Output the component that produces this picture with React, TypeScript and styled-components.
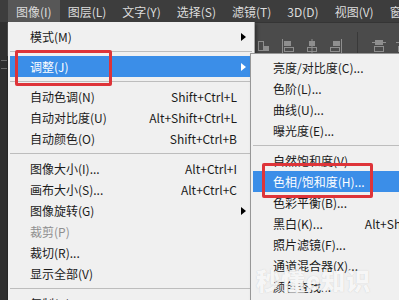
import styled, { createGlobalStyle } from 'styled-components';

const GlobalStyle = createGlobalStyle`
  html, body {
    margin: 0;
    padding: 0;
    width: 399px;
    height: 300px;
    overflow: hidden;
    background: #282828;
  }
  body {
    font-family: "Noto Sans CJK SC", "Noto Sans", sans-serif;
  }
`;

type Item =
  | { label: string; shortcut?: string; arrow?: boolean; active?: boolean; disabled?: boolean }
  | 'sep';

const topMenus = ['图像(I)', '图层(L)', '文字(Y)', '选择(S)', '滤镜(T)', '3D(D)', '视图(V)', '窗口(W)'];

const imageMenu: Item[] = [
  { label: '模式(M)', arrow: true },
  'sep',
  { label: '调整(J)', arrow: true, active: true },
  'sep',
  { label: '自动色调(N)', shortcut: 'Shift+Ctrl+L' },
  { label: '自动对比度(U)', shortcut: 'Alt+Shift+Ctrl+L' },
  { label: '自动颜色(O)', shortcut: 'Shift+Ctrl+B' },
  'sep',
  { label: '图像大小(I)...', shortcut: 'Alt+Ctrl+I' },
  { label: '画布大小(S)...', shortcut: 'Alt+Ctrl+C' },
  { label: '图像旋转(G)', arrow: true },
  { label: '裁剪(P)', disabled: true },
  { label: '裁切(R)...' },
  { label: '显示全部(V)' },
  'sep',
  { label: '复制(D)...' },
];

const adjustMenu: Item[] = [
  { label: '亮度/对比度(C)...' },
  { label: '色阶(L)...', shortcut: 'Ctrl+L' },
  { label: '曲线(U)...', shortcut: 'Ctrl+M' },
  { label: '曝光度(E)...' },
  'sep',
  { label: '自然饱和度(V)...' },
  { label: '色相/饱和度(H)...', shortcut: 'Ctrl+U', active: true },
  { label: '色彩平衡(B)...', shortcut: 'Ctrl+B' },
  { label: '黑白(K)...', shortcut: 'Alt+Shift+Ctrl+B' },
  { label: '照片滤镜(F)...' },
  { label: '通道混合器(X)...' },
  { label: '颜色查找...' },
  'sep',
];

function renderItems(items: Item[]) {
  return items.map((it, i) => {
    if (it === 'sep') return <Separator key={i} />;
    return (
      <Row key={i} $active={it.active} $disabled={it.disabled}>
        <span>{it.label}</span>
        <Shortcut $active={it.active}>{it.shortcut ?? ''}</Shortcut>
        <ArrowCell>{it.arrow && <Arrow $active={it.active} />}</ArrowCell>
      </Row>
    );
  });
}

const AlignIcon = ({ kind }: { kind: number }) => (
  <svg width="14" height="16" viewBox="0 0 14 16" fill="none" stroke="#8e8e8e" strokeWidth="1">
    {kind === 0 && (
      <>
        <rect x="1.5" y="3.5" width="5" height="9" />
        <rect x="7.5" y="8.5" width="4" height="4" fill="#8e8e8e" />
      </>
    )}
    {kind === 1 && (
      <>
        <line x1="1.5" y1="1" x2="1.5" y2="15" />
        <rect x="3.5" y="3.5" width="6" height="4" fill="#8e8e8e" />
        <rect x="3.5" y="9.5" width="9" height="4" />
      </>
    )}
    {kind === 2 && (
      <>
        <line x1="7" y1="1" x2="7" y2="15" />
        <rect x="4.5" y="3.5" width="5" height="4" fill="#8e8e8e" />
        <rect x="2.5" y="9.5" width="9" height="4" />
      </>
    )}
    {kind === 3 && (
      <>
        <line x1="12.5" y1="1" x2="12.5" y2="15" />
        <rect x="4.5" y="3.5" width="6" height="4" fill="#8e8e8e" />
        <rect x="1.5" y="9.5" width="9" height="4" />
      </>
    )}
    {kind === 4 && (
      <>
        <line x1="0" y1="4.5" x2="14" y2="4.5" />
        <rect x="3.5" y="2.5" width="7" height="4" fill="#8e8e8e" />
        <rect x="2.5" y="8.5" width="9" height="5" />
      </>
    )}
  </svg>
);

export default function App() {
  return (
    <>
      <GlobalStyle />
      <Screen>
        <MenuBar>
          {topMenus.map((m, i) => (
            <MenuTitle key={m} $open={i === 0}>
              {m}
            </MenuTitle>
          ))}
        </MenuBar>
        <Workspace>
          <ToolStrip>
            <Grip />
          </ToolStrip>
          <MainArea>
            <OptionsBar>
              <AlignIcon kind={0} />
              <AlignIcon kind={1} />
              <AlignIcon kind={2} />
              <AlignIcon kind={3} />
              <BarDivider />
              <AlignIcon kind={4} />
              <AlignIcon kind={4} />
            </OptionsBar>
            <Canvas />
          </MainArea>
        </Workspace>

        <Dropdown>{renderItems(imageMenu)}</Dropdown>
        <Submenu>{renderItems(adjustMenu)}</Submenu>

        <Marker style={{ left: 15, top: 50, width: 97, height: 36 }} />
        <Marker style={{ left: 262, top: 163, width: 111, height: 35 }} />
        <Watermark>秒懂e知识</Watermark>
      </Screen>
    </>
  );
}

const Screen = styled.div`
  position: relative;
  width: 399px;
  height: 300px;
  overflow: hidden;
  display: flex;
  flex-direction: column;
  background: #282828;
`;

const MenuBar = styled.div`
  display: flex;
  height: 22px;
  padding-left: 8px;
  background: #3d3d3d;
  flex-shrink: 0;
`;

const MenuTitle = styled.div<{ $open?: boolean }>`
  display: flex;
  align-items: center;
  padding: 0 8px;
  font-size: 12px;
  color: #dcdcdc;
  white-space: nowrap;
  background: ${(p) => (p.$open ? '#575757' : 'transparent')};
`;

const Workspace = styled.div`
  flex: 1;
  display: flex;
`;

const ToolStrip = styled.div`
  width: 8px;
  background: #2f2f2f;
  display: flex;
  flex-direction: column;
  padding-top: 38px;
`;

const Grip = styled.div`
  width: 6px;
  height: 9px;
  border-top: 1px solid #6a6a6a;
  border-bottom: 1px solid #6a6a6a;
  box-sizing: border-box;
  margin-left: 1px;
`;

const MainArea = styled.div`
  flex: 1;
  display: flex;
  flex-direction: column;
`;

const OptionsBar = styled.div`
  height: 34px;
  background: #4b4b4b;
  border-top: 1px solid #353535;
  display: flex;
  align-items: flex-end;
  gap: 10px;
  padding: 0 0 2px 250px;
  box-sizing: border-box;
`;

const BarDivider = styled.div`
  width: 1px;
  height: 22px;
  background: #393939;
  margin: 0 4px;
`;

const Canvas = styled.div`
  flex: 1;
  background: #282828;
`;

const Dropdown = styled.div`
  position: absolute;
  left: 8px;
  top: 22px;
  width: 247px;
  padding-top: 4px;
  background: #f0f0f0;
  border-right: 1px solid #a8a8a8;
  box-shadow: 2px 2px 3px rgba(0, 0, 0, 0.35);
  box-sizing: border-box;
`;

const Submenu = styled.div`
  position: absolute;
  left: 250px;
  top: 53px;
  width: 222px;
  padding-top: 3px;
  background: #f0f0f0;
  border: 1px solid #979797;
  box-shadow: 2px 2px 3px rgba(0, 0, 0, 0.35);
  box-sizing: border-box;
`;

const Row = styled.div<{ $active?: boolean; $disabled?: boolean }>`
  display: grid;
  grid-template-columns: 1fr auto 15px;
  align-items: center;
  height: 21px;
  margin: 0 2px;
  padding-left: 20px;
  font-size: 12px;
  white-space: nowrap;
  background: ${(p) => (p.$active ? '#3b8ee8' : 'transparent')};
  color: ${(p) => (p.$active ? '#ffffff' : p.$disabled ? '#8f8f8f' : '#1b1b1b')};
`;

const Shortcut = styled.span<{ $active?: boolean }>`
  text-align: right;
  color: ${(p) => (p.$active ? '#ffffff' : '#1b1b1b')};
`;

const ArrowCell = styled.span`
  display: flex;
  align-items: center;
  padding-left: 4px;
`;

const Arrow = styled.span<{ $active?: boolean }>`
  width: 0;
  height: 0;
  border-top: 4px solid transparent;
  border-bottom: 4px solid transparent;
  border-left: 5px solid ${(p) => (p.$active ? '#ffffff' : '#000000')};
`;

const Separator = styled.div`
  height: 9px;
  margin: 0 2px;
  display: flex;
  align-items: center;
  &::after {
    content: '';
    flex: 1;
    height: 1px;
    background: #bdbdbd;
  }
`;

const Marker = styled.div`
  position: absolute;
  border: 3px solid #de3439;
  border-radius: 2px;
  box-sizing: border-box;
  pointer-events: none;
`;

const Watermark = styled.div`
  position: absolute;
  left: 256px;
  top: 262px;
  font-size: 24px;
  font-weight: 900;
  letter-spacing: 1px;
  color: rgba(255, 255, 255, 0.85);
  text-shadow: 0 0 1px rgba(160, 160, 160, 0.5);
  pointer-events: none;
`;
